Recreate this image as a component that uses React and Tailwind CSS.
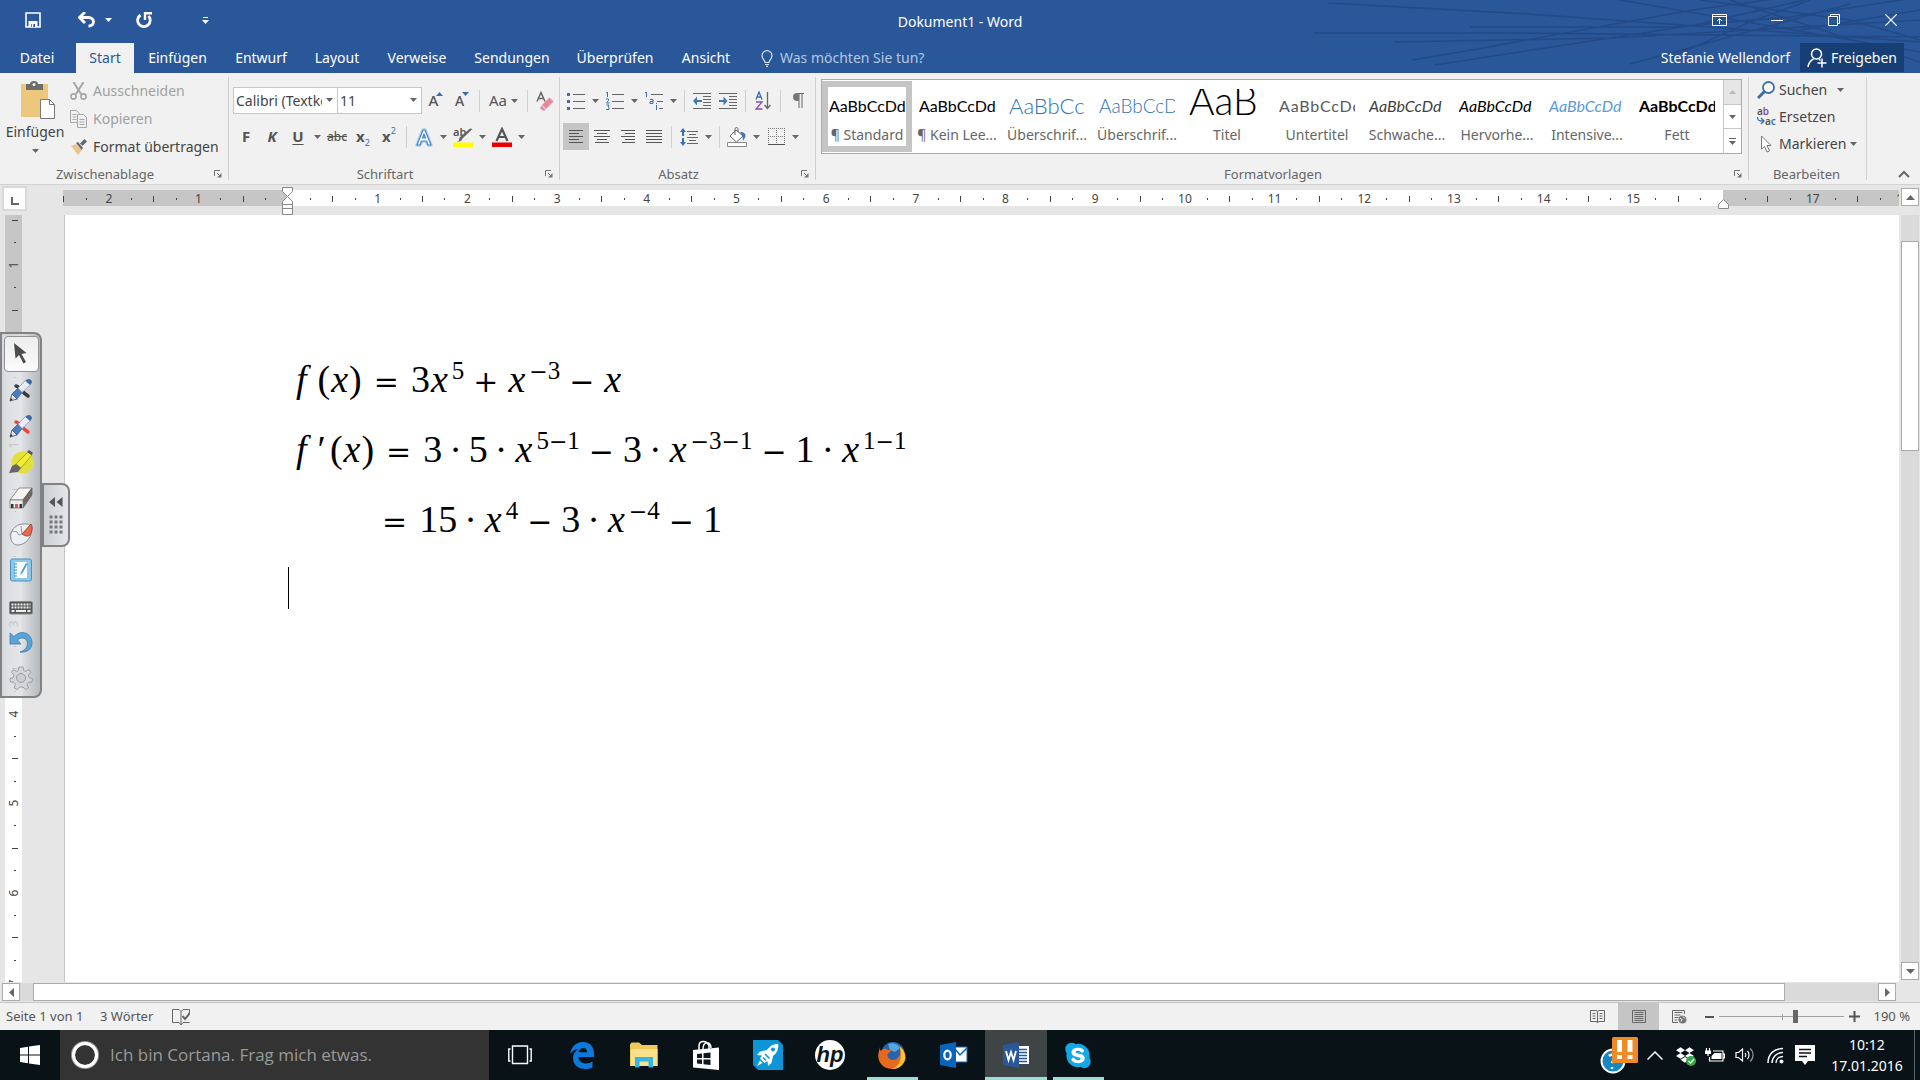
import React from "react";
import { FaEdge, FaDropbox, FaSkype } from "react-icons/fa";

const UI = "font-['Noto_Sans',sans-serif]";

function Caret({ up = false, className = "" }) {
  return (
    <svg viewBox="0 0 7 4" className={`h-1 w-[7px] shrink-0 fill-current ${className}`} aria-hidden="true">
      <path d={up ? "M0 4h7L3.5 0z" : "M0 0h7L3.5 4z"} />
    </svg>
  );
}

function Tool({ label, active = false, children }) {
  return (
    <button
      type="button"
      aria-label={label}
      className={`flex h-[27px] w-[26px] shrink-0 items-center justify-center ${active ? "bg-[#c5c5c5]" : ""}`}
    >
      {children}
    </button>
  );
}

function Drop({ label }) {
  return (
    <button type="button" aria-label={label} className="flex h-[27px] w-[13px] shrink-0 items-center justify-center text-[#666]">
      <Caret />
    </button>
  );
}

function Sep() {
  return <span className="mx-1 h-[22px] w-px shrink-0 bg-[#d0d0d0]" />;
}

function Launcher() {
  return (
    <button type="button" aria-label="Mehr Optionen" className="flex h-4 w-4 items-center justify-center">
      <svg viewBox="0 0 8 8" className="h-2 w-2" fill="none" stroke="#777" aria-hidden="true">
        <path d="M.5 6V.5H6M3 3l3 3" />
        <path d="M7.500 3v4.500H3z" fill="#777" stroke="none" />
      </svg>
    </button>
  );
}

function Group({ title, launcher = true, width, children }) {
  return (
    <section className={`flex flex-col ${width}`} aria-label={title}>
      <div className="flex flex-1">
        <div className="min-w-0 flex-1">{children}</div>
      </div>
      <div className="flex h-5 items-center pr-0.5">
        <span className="flex-1 text-center text-[13px] leading-5 text-[#666]">{title}</span>
        {launcher && <Launcher />}
      </div>
    </section>
  );
}

function Divider() {
  return <span className="my-1 w-px shrink-0 bg-[#d0d0d0]" />;
}

/* ---------- title bar ---------- */

function TitleBar() {
  return (
    <div className="flex h-[43px] items-start justify-between">
      <div className="flex w-0 flex-1 items-center pt-2 text-white">
        <button type="button" aria-label="Speichern" className="ml-5 flex h-6 w-[26px] items-center justify-center">
          <svg viewBox="0 0 16 16" className="h-4 w-4" fill="none" stroke="currentColor" strokeWidth="1.600" aria-hidden="true">
            <path d="M1 1h14v14H1z" />
            <path d="M3.500 9h9v6h-9z" fill="currentColor" stroke="none" />
            <path d="M6 12h4v3H6z" fill="#2a579a" stroke="none" />
            <path d="M7.500 12v3" />
          </svg>
        </button>
        <button type="button" aria-label="Rückgängig" className="ml-7 flex h-6 w-[26px] items-center justify-center">
          <svg viewBox="0 0 18 16" className="h-4 w-[18px]" fill="none" stroke="currentColor" strokeWidth="2.800" aria-hidden="true">
            <path d="M2 5.500h8.500c3 0 5 1.800 5 4.300s-2 4.200-5 4.200" />
            <path d="M7 0L1.500 5.500 7 11" />
          </svg>
        </button>
        <button type="button" aria-label="Rückgängig-Liste" className="flex h-6 w-4 items-center justify-center">
          <Caret />
        </button>
        <button type="button" aria-label="Wiederholen" className="ml-4 flex h-6 w-6 items-center justify-center">
          <svg viewBox="0 0 18 18" className="h-[18px] w-[18px]" fill="none" stroke="currentColor" strokeWidth="2.800" aria-hidden="true">
            <path d="M5.500 4A6.300 6.300 0 1 0 13.500 5" />
            <path d="M10 9V2.200h7" strokeWidth="2.400" />
          </svg>
        </button>
        <button type="button" aria-label="Symbolleiste anpassen" className="ml-[39px] flex h-6 w-5 flex-col items-center justify-center gap-0.5">
          <span className="h-px w-[5px] bg-white" />
          <Caret />
        </button>
      </div>
      <h1 className="pt-3 text-sm leading-5 text-white">Dokument1 - Word</h1>
      <div className="flex w-0 flex-1 justify-end pt-2 text-white">
        <button type="button" aria-label="Menüband-Anzeigeoptionen" className="flex h-6 w-[58px] items-center justify-center">
          <svg viewBox="0 0 15 12" className="h-3 w-[15px]" fill="none" stroke="currentColor" aria-hidden="true">
            <path d="M.5.5h14v11H.5zM.5 2.500h14M7.500 10V5M5 7l2.500-2.500L10 7" />
          </svg>
        </button>
        <button type="button" aria-label="Minimieren" className="flex h-6 w-[57px] items-center justify-center">
          <span className="h-px w-3 bg-white" />
        </button>
        <button type="button" aria-label="Verkleinern" className="flex h-6 w-[57px] items-center justify-center">
          <svg viewBox="0 0 12 12" className="h-3 w-3" fill="none" stroke="currentColor" aria-hidden="true">
            <path d="M.5 2.500h9v9h-9zM2.500 2.500v-2h9v9h-2" />
          </svg>
        </button>
        <button type="button" aria-label="Schließen" className="mr-px flex h-6 w-[57px] items-center justify-center">
          <svg viewBox="0 0 12 12" className="h-3 w-3" fill="none" stroke="currentColor" strokeWidth="1.200" aria-hidden="true">
            <path d="M0 0l12 12M12 0L0 12" />
          </svg>
        </button>
      </div>
    </div>
  );
}

const TABS = [
  ["Datei", "w-[74px] mr-0.5"],
  ["Start", "w-[58px]"],
  ["Einfügen", "w-[87px]"],
  ["Entwurf", "w-20"],
  ["Layout", "w-[72px]"],
  ["Verweise", "w-[88px]"],
  ["Sendungen", "w-[102px]"],
  ["Überprüfen", "w-[104px]"],
  ["Ansicht", "w-[78px]"],
];

function TabRow() {
  return (
    <div className="flex h-[30px] items-stretch">
      <nav className="flex">
        {TABS.map(([t, w]) => (
          <button
            key={t}
            type="button"
            className={`${w} text-center text-sm ${t === "Start" ? "bg-[#f1f1f1] text-[#2a579a]" : "text-white"}`}
          >
            {t}
          </button>
        ))}
      </nav>
      <label className="ml-4 flex items-center gap-[7px] text-[#b5c7e3]">
        <svg viewBox="0 0 12 17" className="h-[17px] w-3" fill="none" stroke="#d6e0f0" strokeWidth="1.200" aria-hidden="true">
          <path d="M4 12.500c0-2.500-3-3.500-3-6.800a5 5 0 0 1 10 0c0 3.300-3 4.300-3 6.800zM4 14.500h4M5 16.400h2" />
        </svg>
        <input
          aria-label="Was möchten Sie tun?"
          placeholder="Was möchten Sie tun?"
          className="w-60 bg-transparent text-sm outline-none placeholder:text-[#b5c7e3]"
        />
      </label>
      <div className="ml-auto flex items-stretch pr-4">
        <button type="button" className="px-2.5 text-sm text-white">Stefanie Wellendorf</button>
        <button type="button" className="mb-px flex w-[104px] items-center justify-center gap-1 bg-[#173f75] text-sm text-white">
          <svg viewBox="0 0 20 20" className="h-5 w-5 shrink-0" fill="none" stroke="currentColor" strokeWidth="1.500" aria-hidden="true">
            <circle cx="9.500" cy="6" r="5" />
            <path d="M1 19c.5-4 2.500-6.500 5.500-8M12 11l1.500 1.500M15 10.500v9M10.500 15h9" />
          </svg>
          Freigeben
        </button>
      </div>
    </div>
  );
}

function Header() {
  return (
    <header className="relative shrink-0 bg-[#2a579a]">
      <svg viewBox="0 0 620 73" className="absolute right-0 top-0 h-[73px] w-[620px]" fill="none" stroke="#234a86" strokeWidth="1.600" aria-hidden="true">
        <path d="M28 3l200 11 392 28M14 33h200l406 4M94 42l220-4 306-18M112 60l60-10 220-40 90-12M135 65l260-40 110-25M320 0l300 52M400 0l150 20 70 20M170 27h200l120-10 130-20M360 62l90-40 60-22M430 0l190 62M330 64l220-60M500 30l120-20" />
      </svg>
      <div className="relative">
        <TitleBar />
        <TabRow />
      </div>
    </header>
  );
}

/* ---------- ribbon ---------- */

function Clipboard() {
  return (
    <Group title="Zwischenablage" width="w-[228px]">
      <div className="flex">
        <button type="button" className="mt-2 flex w-[70px] flex-col items-center text-[#444]">
          <svg viewBox="0 0 36 38" className="ml-1.5 h-[38px] w-9" aria-hidden="true">
            <path d="M1 3h27v33H1z" fill="#edc77c" />
            <path d="M6 9V3h4c0-2 1.500-3 4-3s4 1 4 3h5v6z" fill="#6d6d6d" />
            <circle cx="14" cy="3.500" r="1.500" fill="#f1f1f1" />
            <path d="M20.500 18.500h9l5 5V37.500h-14z" fill="#fff" stroke="#777" />
            <path d="M29.500 18.500v5h5" fill="none" stroke="#777" />
          </svg>
          <span className="mt-[3px] text-sm leading-5">Einfügen</span>
          <Caret className="mt-[7px] text-[#666]" />
        </button>
        <div className="mt-1 flex flex-col">
          <button type="button" className="flex h-7 items-center gap-1.5 text-sm text-[#a0a0a0]">
            <svg viewBox="0 0 17 18" className="h-[18px] w-[17px]" fill="none" stroke="#a6a6a6" strokeWidth="1.600" aria-hidden="true">
              <path d="M3.500 0l7.500 12M13.500 0L6 12" strokeWidth="2" />
              <circle cx="3.500" cy="14.500" r="2.600" />
              <circle cx="13.500" cy="14.500" r="2.600" />
            </svg>
            Ausschneiden
          </button>
          <button type="button" className="flex h-7 items-center gap-1.5 text-sm text-[#a0a0a0]">
            <svg viewBox="0 0 17 18" className="h-[18px] w-[17px]" fill="#f1f1f1" stroke="#a6a6a6" aria-hidden="true">
              <path d="M.5.500h6l3 3v9h-9zM2.500 4.500h4M2.500 7h4M2.500 9.500h4" />
              <path d="M7.500 4.500h6l3 3v10h-9zM9.500 9.500h5M9.500 12h5M9.500 14.500h5" />
            </svg>
            Kopieren
          </button>
          <button type="button" className="flex h-7 items-center gap-1.5 text-sm text-[#444]">
            <svg viewBox="0 0 17 16" className="h-4 w-[17px]" aria-hidden="true">
              <path d="M1 7l5-2 6 6-4 5z" fill="#edc38a" />
              <path d="M6 4l2-1 5 6-1.500 1.800zM10 4.500L14.500 0 17 2.500l-4.500 4.200z" fill="#666" />
            </svg>
            Format übertragen
          </button>
        </div>
      </div>
    </Group>
  );
}

function Combo({ label, value, width }) {
  return (
    <label className={`relative -mr-px flex h-[27px] items-center border border-[#c6c6c6] bg-white ${width}`}>
      <select aria-label={label} className="h-full w-full appearance-none bg-transparent pl-0.5 pr-[15px] text-sm text-[#444] outline-none">
        <option>{value}</option>
      </select>
      <Caret className="pointer-events-none absolute right-1 top-2.5 text-[#666]" />
    </label>
  );
}

function FontGroup() {
  return (
    <Group title="Schriftart" width="w-[330px]">
      <div className="flex flex-col gap-[9px] pl-1 pt-3.5 text-[#555]">
        <div className="flex items-center">
          <Combo label="Schriftart" value="Calibri (Textkörper)" width="w-[105px]" />
          <Combo label="Schriftgrad" value="11" width="w-[85px]" />
          <span className="w-0.5" />
          <Tool label="Schrift vergrößern">
            <span className="text-[15px] font-medium">A</span>
            <Caret up className="-ml-0.5 mb-3.5 text-[#3b6fb5]" />
          </Tool>
          <Tool label="Schrift verkleinern">
            <span className="text-sm font-medium">A</span>
            <Caret className="-ml-0.5 mb-3.5 text-[#3b6fb5]" />
          </Tool>
          <Sep />
          <button type="button" aria-label="Groß-/Kleinschreibung" className="flex h-[27px] w-[39px] items-center justify-center gap-1 text-[15px]">
            Aa
            <Caret className="text-[#666]" />
          </button>
          <Sep />
          <Tool label="Formatierung löschen">
            <svg viewBox="0 0 18 20" className="h-5 w-[18px]" aria-hidden="true">
              <path d="M1 10.500L5 1.500l4 9M2.500 7.500h5" fill="none" stroke="#666" strokeWidth="1.500" />
              <path d="M13.500 6.500l4 4-7.500 7.500-4-4z" fill="#e8899b" />
              <path d="M5.500 14.500l4 4-1 1H6.500L4 17z" fill="#e8899b" />
            </svg>
          </Tool>
        </div>
        <div className="flex items-center">
          <Tool label="Fett"><span className="text-[15px] font-bold">F</span></Tool>
          <Tool label="Kursiv"><span className="text-[15px] font-bold italic">K</span></Tool>
          <Tool label="Unterstrichen"><span className="text-[15px] font-bold underline decoration-1 underline-offset-2">U</span></Tool>
          <Drop label="Unterstreichungsart" />
          <Tool label="Durchgestrichen"><span className="text-xs font-medium line-through">abc</span></Tool>
          <Tool label="Tiefgestellt">
            <span className="text-[15px] font-bold">x</span>
            <span className="mt-3 text-[9px] text-[#3b6fb5]">2</span>
          </Tool>
          <Tool label="Hochgestellt">
            <span className="text-[15px] font-bold">x</span>
            <span className="mb-3 text-[9px] text-[#3b6fb5]">2</span>
          </Tool>
          <Sep />
          <Tool label="Texteffekte">
            <svg viewBox="0 0 18 20" className="h-5 w-[18px]" fill="none" strokeLinejoin="round" aria-hidden="true">
              <path d="M2 18L8 3h2l6 15h-3l-1.500-4h-5L5 18zM7.500 11h3L9 7z" stroke="#b5d3f2" strokeWidth="3.500" />
              <path d="M2 18L8 3h2l6 15h-3l-1.500-4h-5L5 18zM7.500 11h3L9 7z" fill="#fff" stroke="#4481c4" strokeWidth="1.200" />
            </svg>
          </Tool>
          <Drop label="Texteffekte wählen" />
          <Tool label="Texthervorhebungsfarbe">
            <svg viewBox="0 0 20 20" className="h-5 w-5" aria-hidden="true">
              <text x="0" y="9" fontSize="11" fontWeight="600" fill="#555">ab</text>
              <path d="M19.500 2L10 11l-2 3-4 1 2-1.500.5-3L17 1.500z" fill="#666" />
              <path d="M0 15.500h20v4.500H0z" fill="#ffff00" />
            </svg>
          </Tool>
          <Drop label="Hervorhebungsfarbe wählen" />
          <Tool label="Schriftfarbe">
            <svg viewBox="0 0 20 20" className="h-5 w-5" aria-hidden="true">
              <path d="M4.500 14L10 2l5.500 12M6.500 10h7" fill="none" stroke="#555" strokeWidth="2.200" />
              <path d="M0 15.500h20v4.500H0z" fill="#ea0000" />
            </svg>
          </Tool>
          <Drop label="Schriftfarbe wählen" />
        </div>
      </div>
    </Group>
  );
}

function Lines({ d }) {
  return (
    <svg viewBox="0 0 16 13" className="h-[13px] w-4" fill="none" stroke="#555" aria-hidden="true">
      <path d={d} />
    </svg>
  );
}

function ParagraphGroup() {
  return (
    <Group title="Absatz" width="w-[255px]">
      <div className="flex flex-col gap-[9px] pl-[3px] pt-3.5">
        <div className="flex items-center">
          <Tool label="Aufzählungszeichen">
            <svg viewBox="0 0 18 18" className="h-[18px] w-[18px]" aria-hidden="true">
              <path d="M6 2.500h12M6 9.500h12M6 16.500h12" stroke="#666" />
              <path d="M0 1h3v3H0zM0 8h3v3H0zM0 15h3v3H0z" fill="#3b6fb5" />
            </svg>
          </Tool>
          <Drop label="Aufzählungsarten" />
          <Tool label="Nummerierung">
            <svg viewBox="0 0 18 18" className="h-[18px] w-[18px]" aria-hidden="true">
              <path d="M6 2.500h12M6 9.500h12M6 16.500h12" stroke="#666" />
              <path d="M0 1l1.500-1v5M0 7h2.500v1.500L.5 11h3M.5 13H3l-1 2 1 .5V17.500H0" fill="none" stroke="#3b6fb5" />
            </svg>
          </Tool>
          <Drop label="Nummerierungsarten" />
          <Tool label="Liste mit mehreren Ebenen">
            <svg viewBox="0 0 19 18" className="h-[18px] w-[19px]" aria-hidden="true">
              <path d="M6 2.500h12M12 9.500h6M14 16.500h4" stroke="#666" />
              <path d="M0 1l1.500-1v5M5 7.500h3v4H5v-2h3M11.500 11v1M11.500 13v5" fill="none" stroke="#3b6fb5" />
            </svg>
          </Tool>
          <Drop label="Ebenenarten" />
          <Sep />
          <Tool label="Einzug verkleinern">
            <svg viewBox="0 0 18 16" className="h-4 w-[18px]" aria-hidden="true">
              <path d="M0 .5h18M10 3.500h8M10 6.500h8M10 9.500h8M10 12.500h8M0 15.500h18" stroke="#666" />
              <path d="M9 7H4V3.500L0 8l4 4.500V9h5z" fill="#4078b0" />
            </svg>
          </Tool>
          <Tool label="Einzug vergrößern">
            <svg viewBox="0 0 18 16" className="h-4 w-[18px]" aria-hidden="true">
              <path d="M0 .5h18M10 3.500h8M10 6.500h8M10 9.500h8M10 12.500h8M0 15.500h18" stroke="#666" />
              <path d="M0 7h4.500V3.500L8.500 8l-4 4.500V9H0z" fill="#4078b0" />
            </svg>
          </Tool>
          <Sep />
          <Tool label="Sortieren">
            <svg viewBox="0 0 17 19" className="h-[19px] w-[17px]" fill="none" aria-hidden="true">
              <path d="M1 8.500L4 1l3 7.500M2 6h4" stroke="#3b6fb5" strokeWidth="1.300" />
              <path d="M1 11h6l-6 7h6.500" stroke="#8b4ea5" strokeWidth="1.300" />
              <path d="M12.500 1v16M9.500 14l3 3.500 3-3.500" stroke="#666" strokeWidth="1.300" />
            </svg>
          </Tool>
          <Sep />
          <Tool label="Alle anzeigen">
            <svg viewBox="0 0 11 15" className="h-[15px] w-[11px]" aria-hidden="true">
              <path d="M11 .5H4M6 0v15M9 0v15" stroke="#666" fill="none" />
              <path d="M6 0H4a4 4 0 0 0 0 8h2z" fill="#777" />
            </svg>
          </Tool>
        </div>
        <div className="flex items-center">
          <Tool label="Linksbündig" active><Lines d="M1 .5h14M1 3.500h10M1 6.500h14M1 9.500h10M1 12.500h14" /></Tool>
          <Tool label="Zentriert"><Lines d="M0 .5h16M3 3.500h10M0 6.500h16M3 9.500h10M1 12.500h14" /></Tool>
          <Tool label="Rechtsbündig"><Lines d="M1 .5h14M5 3.500h10M1 6.500h14M5 9.500h10M2 12.500h13" /></Tool>
          <Tool label="Blocksatz"><Lines d="M0 .5h16M0 3.500h16M0 6.500h16M0 9.500h16M0 12.500h16" /></Tool>
          <Sep />
          <Tool label="Zeilenabstand">
            <svg viewBox="0 0 18 18" className="h-[18px] w-[18px]" aria-hidden="true">
              <path d="M7 3.500h11M9 6.500h7M7 9.500h11M9 12.500h7M7 15.500h11" stroke="#666" />
              <path d="M3 0L0 4h2v4h2V4h2zM3 18l3-4H4v-4H2v4H0z" fill="#3b6fb5" />
            </svg>
          </Tool>
          <Drop label="Abstand wählen" />
          <Sep />
          <Tool label="Schattierung">
            <svg viewBox="0 0 20 20" className="h-5 w-5" aria-hidden="true">
              <path d="M3 9l6-6 7 6-6.500 6z" fill="#fff" stroke="#666" />
              <path d="M8 8V2c0-2 3-2 3 0v3" fill="none" stroke="#666" />
              <path d="M13 5c4 0 6 2 5.500 4.500L16 14c0-4-1-6-3-9z" fill="#4078b0" />
              <path d="M.5 15.500h19v4H.5z" fill="#fff" stroke="#888" />
            </svg>
          </Tool>
          <Drop label="Schattierung wählen" />
          <Tool label="Rahmen">
            <svg viewBox="0 0 17 17" className="h-[17px] w-[17px]" fill="none" stroke="#777" aria-hidden="true">
              <path d="M0 .5h17M.5 0v16M16.500 0v16M8.500 0v16M0 8.500h17" strokeDasharray="1 1" />
              <path d="M0 16.500h17" stroke="#555" />
            </svg>
          </Tool>
          <Drop label="Rahmen wählen" />
        </div>
      </div>
    </Group>
  );
}

const STYLES = [
  ["¶ Standard", "AaBbCcDd", "text-base leading-[34px] text-black", true],
  ["¶ Kein Lee...", "AaBbCcDd", "text-base leading-[34px] text-black"],
  ["Überschrif...", "AaBbCcDd", "text-[22px] leading-[34px] font-light text-[#2e74b5]"],
  ["Überschrif...", "AaBbCcDd", "text-[19px] leading-[34px] font-light text-[#2e74b5]"],
  ["Titel", "AaB", "text-[39px] leading-[22px] font-light text-black"],
  ["Untertitel", "AaBbCcDd", "text-base leading-[34px] tracking-wider text-[#5a5a5a]"],
  ["Schwache...", "AaBbCcDd", "text-base leading-[34px] italic text-[#404040]"],
  ["Hervorhe...", "AaBbCcDd", "text-base leading-[34px] italic text-black"],
  ["Intensive...", "AaBbCcDd", "text-base leading-[34px] italic text-[#5b9bd5]"],
  ["Fett", "AaBbCcDd", "text-base leading-[34px] font-bold text-black"],
];

function StylesGroup() {
  return (
    <Group title="Formatvorlagen" width="min-w-0 flex-1">
      <div className="ml-[5px] mr-1.5 mt-1.5 flex h-[75px] border border-[#ababab] bg-white">
        <div className="flex min-w-0 flex-1 overflow-hidden">
          {STYLES.map(([name, sample, look, selected], i) => (
            <button
              key={i}
              type="button"
              className={`my-px flex w-[90px] shrink-0 flex-col items-center pt-2 ${selected ? "ring-[6px] ring-inset ring-[#c5c5c5]" : ""}`}
            >
              <span className="flex h-[30px] w-[76px] items-start overflow-hidden whitespace-nowrap">
                <span className={`font-['Lato',sans-serif] ${look}`}>{sample}</span>
              </span>
              <span className="mt-1.5 w-[84px] whitespace-nowrap text-center text-sm leading-5 text-[#666]">{name}</span>
            </button>
          ))}
        </div>
        <div className="flex w-[18px] flex-col divide-y divide-[#c6c6c6] border-l border-[#c6c6c6] text-[#666]">
          <button type="button" aria-label="Nach oben" className="flex flex-1 items-center justify-center bg-[#e6e6e6] text-[#bbb]"><Caret up /></button>
          <button type="button" aria-label="Nach unten" className="flex flex-1 items-center justify-center"><Caret /></button>
          <button type="button" aria-label="Weitere Formatvorlagen" className="flex flex-1 flex-col items-center justify-center gap-0.5">
            <span className="h-px w-[7px] bg-[#666]" />
            <Caret />
          </button>
        </div>
      </div>
    </Group>
  );
}

function EditGroup() {
  return (
    <Group title="Bearbeiten" launcher={false} width="w-[117px]">
      <div className="flex flex-col pl-2 pt-[3px] text-sm text-[#444]">
        <button type="button" className="flex h-[27px] items-center gap-1">
          <svg viewBox="0 0 18 18" className="h-[18px] w-[18px]" fill="none" stroke="#3d6fa5" aria-hidden="true">
            <circle cx="11.500" cy="6.500" r="5.500" strokeWidth="1.800" fill="#fff" />
            <path d="M7.500 10.500L1 17" strokeWidth="3" />
          </svg>
          Suchen
          <Caret className="ml-1.5 text-[#666]" />
        </button>
        <button type="button" className="flex h-[27px] items-center gap-[3px]">
          <svg viewBox="0 0 19 19" className="h-[19px] w-[19px]" aria-hidden="true">
            <text x="0" y="8" fontSize="10" fontWeight="600" fill="#555">a<tspan fill="#8b4ea5">b</tspan></text>
            <text x="8" y="18" fontSize="10" fontWeight="600" fill="#555">a<tspan fill="#3b6fb5">c</tspan></text>
            <path d="M.5 10c0 4 2 4 6 4M4 11l3 3-3 3" fill="none" stroke="#3b6fb5" strokeWidth="1.300" />
          </svg>
          Ersetzen
        </button>
        <button type="button" className="flex h-[27px] items-center gap-1">
          <svg viewBox="0 0 18 18" className="h-[18px] w-[18px]" fill="#fff" stroke="#777" aria-hidden="true">
            <path d="M4.500 1v13l3-2.500 2.500 5.500 2.500-1-2.500-5.500h4z" />
          </svg>
          Markieren
          <Caret className="text-[#666]" />
        </button>
      </div>
    </Group>
  );
}

function Ribbon() {
  return (
    <div className="flex h-28 shrink-0 border-b border-[#d2d2d2] bg-[#f1f1f1]">
      <Clipboard />
      <Divider />
      <FontGroup />
      <Divider />
      <ParagraphGroup />
      <Divider />
      <StylesGroup />
      <Divider />
      <EditGroup />
      <Divider />
      <div className="flex w-[53px] items-end justify-end pb-0.5 pr-2">
        <button type="button" aria-label="Menüband reduzieren" className="flex h-4 w-4 items-center justify-center">
          <svg viewBox="0 0 12 8" className="h-2 w-3" fill="none" stroke="#666" strokeWidth="2" aria-hidden="true">
            <path d="M1 7l5-5 5 5" />
          </svg>
        </button>
      </div>
    </div>
  );
}

/* ---------- rulers ---------- */

function Marks({ from, to, vertical = false }) {
  const marks = [];
  for (let q = from; q <= to; q++) marks.push(q);
  return marks.map((q) => {
    const whole = q % 4 === 0;
    const half = q % 2 === 0;
    return (
      <span key={q} className={`flex items-center justify-center ${vertical ? "h-0 flex-[2]" : "w-0 flex-[2]"}`}>
        {whole ? (
          <span className={`text-xs leading-4 ${vertical ? "-rotate-90" : ""}`}>{Math.abs(q / 4)}</span>
        ) : half ? (
          <span className={`bg-[#444] ${vertical ? "h-px w-1.5" : "h-1.5 w-px"}`} />
        ) : (
          <span className={`bg-[#444] ${vertical ? "h-px w-0.5" : "h-0.5 w-px"}`} />
        )}
      </span>
    );
  });
}

function HorizontalRuler() {
  return (
    <div className="flex h-[30px] shrink-0 items-start bg-[#e6e6e6] text-[#444]">
      <button type="button" aria-label="Tabstopp" className="ml-1 mt-[3px] flex h-[21px] w-[21px] items-center justify-center bg-[#fdfdfd] outline outline-2 outline-[#d9d9d9]">
        <span className="mt-1 h-2 w-2 border-b-2 border-l-2 border-[#666]" />
      </button>
      <div className="ml-[38px] mt-[5px] flex h-4 flex-1">
        <div className="flex w-[225px] items-center bg-[#c6c6c6] pt-0.5">
          <span className="h-1.5 w-px bg-[#444]" />
          <span className="flex-1" />
          <Marks from={-9} to={-1} />
          <span className="flex-1" />
        </div>
        <div className="relative flex flex-1 items-center bg-white pt-0.5">
          <span className="flex-1" />
          <Marks from={1} to={63} />
          <span className="flex-1" />
          <svg viewBox="0 0 11 28" className="absolute -left-[6px] -top-[3px] h-7 w-[11px]" fill="#fff" stroke="#888" aria-hidden="true">
            <path d="M.5.500h10v4L5.500 9.500.5 4.500zM.5 17.500v-3l5-5 5 5v3zM.5 21.500h10v6H.5zM.5 17.500h10v4H.5z" />
          </svg>
          <svg viewBox="0 0 11 10" className="absolute -right-[6px] top-[9px] z-10 h-2.5 w-[11px]" fill="#fff" stroke="#888" aria-hidden="true">
            <path d="M.5 9.500v-4l5-5 5 5v4z" />
          </svg>
        </div>
        <div className="flex w-44 overflow-hidden bg-[#c6c6c6] pt-0.5">
          <div className="flex w-[191px] shrink-0 items-center">
            <span className="flex-1" />
            <Marks from={65} to={72} />
          </div>
        </div>
      </div>
      <div className="flex w-[21px] justify-end pr-px pt-[3px]">
        <ScrollButton label="Nach oben blättern" d="M0 5h9L4.500 0z" box="0 0 9 5" size="h-[5px] w-[9px]" />
      </div>
    </div>
  );
}

function ScrollButton({ label, d, box, size }) {
  return (
    <button type="button" aria-label={label} className="flex h-[18px] w-[18px] shrink-0 items-center justify-center border border-[#ababab] bg-white">
      <svg viewBox={box} className={`fill-[#666] ${size}`} aria-hidden="true">
        <path d={d} />
      </svg>
    </button>
  );
}

function VerticalRuler() {
  return (
    <div className="ml-[5px] flex w-[17px] shrink-0 flex-col overflow-hidden text-[#444]">
      <div className="flex h-[140px] shrink-0 flex-col justify-end overflow-hidden bg-[#c6c6c6]">
        <div className="flex h-[146px] shrink-0 flex-col items-center pl-0.5">
          <Marks from={-6} to={-1} vertical />
          <span className="flex-1" />
        </div>
      </div>
      <div className="min-h-0 flex-1 overflow-hidden bg-white">
        <div className="flex h-[639px] flex-col items-center pl-0.5">
          <span className="flex-1" />
          <Marks from={1} to={28} vertical />
        </div>
      </div>
    </div>
  );
}

/* ---------- document ---------- */

function V({ children }) {
  return <i className="mx-px">{children}</i>;
}
function F() {
  return <i className="mr-[11px]">f</i>;
}
function Rel() {
  return <span className="mx-3 font-['DejaVu_Serif',serif] text-[30px] leading-none">=</span>;
}
function Op({ children }) {
  return <span className="mx-[9px] font-['DejaVu_Serif',serif] text-[30px] leading-none">{children}</span>;
}
function Dot() {
  return <span className="mx-[7px]">·</span>;
}
function Minus() {
  return <span className="font-['DejaVu_Serif',serif] text-[22px] leading-none">−</span>;
}
function Sup({ children }) {
  return <span className="relative bottom-[13px] ml-[3px] text-[25px] leading-none">{children}</span>;
}

function Page() {
  return (
    <main className="min-w-0 flex-1 border-l border-[#c6c6c6] bg-white pl-[231px] pt-[129px] font-['Liberation_Serif',serif] text-[38px] leading-[70px] text-black">
      <p className="h-[70px] whitespace-nowrap">
        <F />(<V>x</V>)<Rel />3<V>x</V><Sup>5</Sup><Op>+</Op><V>x</V><Sup><Minus />3</Sup><Op>−</Op><V>x</V>
      </p>
      <p className="h-[70px] whitespace-nowrap">
        <F /><span className="mr-1">′</span>(<V>x</V>)<Rel />3<Dot />5<Dot /><V>x</V><Sup>5<Minus />1</Sup><Op>−</Op>3<Dot /><V>x</V><Sup><Minus />3<Minus />1</Sup><Op>−</Op>1<Dot /><V>x</V><Sup>1<Minus />1</Sup>
      </p>
      <p className="h-[70px] whitespace-nowrap pl-[74px]">
        <Rel />15<Dot /><V>x</V><Sup>4</Sup><Op>−</Op>3<Dot /><V>x</V><Sup><Minus />4</Sup><Op>−</Op>1
      </p>
      <div className="-ml-2 mt-[13px] h-[42px] w-px bg-black" />
    </main>
  );
}

/* ---------- floating pen toolbar ---------- */

function Pen({ stroke }) {
  return (
    <svg viewBox="0 0 24 24" className="h-6 w-6" aria-hidden="true">
      <path d="M7 8c2 0 3 2 5 4s4 4 7 6" fill="none" stroke={stroke} strokeWidth="3.500" strokeLinecap="round" />
      <path d="M1 23l2-7 5 5z" fill="#e5e5e5" stroke="#666" />
      <path d="M3 16l6-6 4 4.500-5 6.500z" fill="#4a7dbd" stroke="#3a5f94" strokeWidth=".8" />
      <path d="M9 10l8-8 5 4-9 8.500z" fill="#e9eef4" stroke="#8a9db5" strokeWidth=".8" />
      <path d="M18 1.500c2-1.500 5 0 5 3l-2 2.500-4.500-4z" fill="#3c6aa8" />
      <path d="M1 23l1-3 1.500 1.500z" fill="#222" />
    </svg>
  );
}

const PEN_TOOLS = [
  ["Auswählen",
    <svg viewBox="0 0 24 24" className="h-6 w-6" aria-hidden="true">
      <path d="M5 1l1.500 15.500 3.500-3.500 4.500 8.500 2.500-1.500-4.500-8 5-1z" fill="#4c4c4c" />
    </svg>],
  ["Stift schwarz", <Pen stroke="#3a3a3a" />],
  ["Stift rot", <Pen stroke="#ee4444" />],
  ["Textmarker",
    <svg viewBox="0 0 26 24" className="h-6 w-[26px]" aria-hidden="true">
      <circle cx="14.500" cy="12.500" r="11" fill="#e3e03c" />
      <path d="M8 14L20 2l4 3-11 13z" fill="#f0ef35" stroke="#a9a81e" />
      <path d="M19 2l2-2 4 3-1.500 2z" fill="#555" />
      <path d="M1 23l3-7 4-2 5 4-3 4z" fill="#666" />
    </svg>],
  ["Radierer",
    <svg viewBox="0 0 24 24" className="h-6 w-6" strokeWidth=".8" aria-hidden="true">
      <path d="M1 14L10 2h13l-9 12z" fill="#f7f5f0" stroke="#777" />
      <path d="M14 14l9-12v7l-9 13z" fill="#6d6862" stroke="#666" />
      <path d="M1 14h13v8H1z" fill="#eee" stroke="#777" />
      <path d="M2 18h2.500v4H2zM10.500 18H13v4h-2.500z" fill="#333" />
      <path d="M6 18h3v4H6z" fill="#e05050" />
    </svg>],
  ["Rechtsklick",
    <svg viewBox="0 0 24 24" className="h-6 w-6" strokeWidth=".9" aria-hidden="true">
      <path d="M2 17C0 10 6 2 14 2c9-1 10 4 8 10-2 7-8 11-13 11-4 0-6-2-7-6z" fill="#eef0f4" stroke="#7c8088" />
      <path d="M13 12l9-10c2 3 1 8-1 11-2 2-5 1-8-1z" fill="#ea6a4e" stroke="#8c4436" />
      <path d="M3 9c2 1 4 0 5 1s1 3 2 3 2-1 3-1L12 4" fill="none" stroke="#8a8e96" />
    </svg>],
  ["Notebook",
    <svg viewBox="0 0 24 24" className="h-6 w-6" aria-hidden="true">
      <rect x="1.500" y="1" width="21" height="22" rx="2" fill="#8cc8e8" stroke="#4a90bf" />
      <path d="M6 4h12v16H6z" fill="#fff" />
      <path d="M5 6h3M5 9h3M5 12h3M5 15h3M5 18h3" stroke="#2d8ac0" />
      <path d="M17 5l-5 9-1 3 2.500-2 5-9z" fill="#4a9fd0" />
    </svg>],
  ["Tastatur",
    <svg viewBox="0 0 24 14" className="mt-1 h-3.5 w-6" aria-hidden="true">
      <rect x=".5" y=".5" width="23" height="12.500" rx="1.500" fill="#555" stroke="#888" />
      <path d="M2.500 3.500h19M2.500 6.500h19" stroke="#eee" strokeWidth="2" strokeDasharray="2 1" />
      <path d="M2.500 10h3M7 10h10M18.500 10h3" stroke="#eee" strokeWidth="2" />
    </svg>],
  ["Rückgängig machen",
    <svg viewBox="0 0 24 24" className="h-6 w-6" aria-hidden="true">
      <path d="M1 3v11h11L8.500 10c4-4 10-2 10 3.500 0 5-4 7.500-7.500 8.500 6 1 12-2.500 12-9C23 3 12-1 5 6.500z" fill="#5ba4da" stroke="#3a78ad" strokeWidth=".8" />
    </svg>],
  ["Einstellungen",
    <svg viewBox="0 0 24 24" className="h-6 w-6" fill="#d4d6d8" stroke="#9c9fa2" aria-hidden="true">
      <path d="M10 1h4l.7 3.500 2 .9L20 3.500l2 3-2.500 2.500.6 2.500 3.400 1-.5 3.500-3.500.3-1.500 2.200 1.500 3.200-3 1.800-2.500-2.500h-3L8 23.500l-3-1.800 1.500-3.200L5 16.300l-3.500-.3-.5-3.500 3.400-1L5 9 2.500 6.500l2-3L7.300 5.400l2-.9z" />
      <circle cx="12" cy="12" r="4.500" fill="#cbcdd0" />
    </svg>],
];

function PenToolbar() {
  return (
    <aside className="absolute left-0 top-[117px] z-10 flex items-center" aria-label="Stiftwerkzeuge">
      <div className="flex h-[366px] w-[42px] flex-col items-center rounded-r-lg border-2 border-[#808284] bg-gradient-to-r from-[#d5d7da]/85 via-[#dfe1e4]/85 to-[#b0b3b6]/90 pt-0.5">
        {PEN_TOOLS.map(([label, icon], i) => (
          <button
            key={label}
            type="button"
            aria-label={label}
            className={`flex h-9 w-[35px] shrink-0 items-center justify-center ${i === 0 ? "rounded border border-[#8f9193] bg-gradient-to-b from-[#ededee] to-[#fbfbfb]" : ""}`}
          >
            {icon}
          </button>
        ))}
      </div>
      <button
        type="button"
        aria-label="Leiste einklappen"
        className="flex h-16 w-7 flex-col items-center justify-center gap-2 rounded-r-lg border-2 border-[#808284] bg-gradient-to-r from-[#cdd0d3] to-[#e4e6e8]"
      >
        <svg viewBox="0 0 14 10" className="h-2.5 w-3.5 fill-[#555]" aria-hidden="true">
          <path d="M6 0v10L0 5zM13.500 0v10l-6-5z" />
        </svg>
        <svg viewBox="0 0 14 19" className="h-[19px] w-3.5" stroke="#777" strokeWidth="3" strokeDasharray="3 2" aria-hidden="true">
          <path d="M.5 2h13M.5 7h13M.5 12h13M.5 17h13" />
        </svg>
      </button>
    </aside>
  );
}

function Workspace() {
  return (
    <div className="relative flex min-h-0 flex-1 bg-[#e6e6e6]">
      <VerticalRuler />
      <div className="w-[42px] shrink-0" />
      <Page />
      <div className="flex w-[21px] shrink-0 flex-col items-end bg-[#e6e6e6] pr-px">
        <div className="w-[18px] flex-1 bg-[#dadada] pt-[26px]">
          <div className="h-[210px] border border-[#ababab] bg-white" />
        </div>
        <div className="pb-0.5">
          <ScrollButton label="Nach unten blättern" d="M0 0h9L4.500 5z" box="0 0 9 5" size="h-[5px] w-[9px]" />
        </div>
      </div>
      <PenToolbar />
    </div>
  );
}

function HorizontalScroll() {
  return (
    <div className="flex h-5 shrink-0 items-center bg-[#e6e6e6] pl-0.5 pr-6">
      <ScrollButton label="Nach links blättern" d="M5 0v9L0 4.500z" box="0 0 5 9" size="h-[9px] w-[5px]" />
      <div className="h-[18px] flex-1 bg-[#dadada] pl-[13px] pr-[93px]">
        <div className="h-full border border-[#ababab] bg-white" />
      </div>
      <ScrollButton label="Nach rechts blättern" d="M0 0v9l5-4.500z" box="0 0 5 9" size="h-[9px] w-[5px]" />
    </div>
  );
}

/* ---------- status bar ---------- */

function StatusBar() {
  return (
    <footer className="flex h-7 shrink-0 items-stretch border-t border-[#c6c6c6] bg-[#f1f1f1] text-[13px] text-[#555]">
      <button type="button" className="w-[88px] whitespace-nowrap pl-1.5 text-left">Seite 1 von 1</button>
      <button type="button" className="w-[76px] whitespace-nowrap pl-3 text-left">3 Wörter</button>
      <button type="button" aria-label="Rechtschreibprüfung" className="flex w-[34px] items-center justify-center">
        <svg viewBox="0 0 18 18" className="h-[18px] w-[18px]" fill="none" stroke="#666" aria-hidden="true">
          <path d="M9 3.500L7 1.500H.5v13H7l2 2.500 2-2.500h6.500M9 3.500V17M9 3.500l2-2h6.500V5" />
          <path d="M10.500 8l2.500 3 5-6" strokeWidth="2" />
        </svg>
      </button>
      <div className="ml-auto flex items-stretch">
        <button type="button" aria-label="Lesemodus" className="flex w-[42px] items-center justify-center">
          <svg viewBox="0 0 15 14" className="h-3.5 w-[15px]" fill="none" stroke="#666" aria-hidden="true">
            <path d="M7.500 2L6.500.5H.5v11h6l1 1.500 1-1.500h6V.5h-6zM7.500 2v11M2.500 3.500h3M2.500 6h3M2.500 8.500h3M9.500 3.500h3M9.500 6h3M9.500 8.500h3" />
          </svg>
        </button>
        <button type="button" aria-label="Seitenlayout" className="flex w-[41px] items-center justify-center bg-[#c5c5c5]">
          <svg viewBox="0 0 14 13" className="h-[13px] w-3.5" fill="none" stroke="#666" aria-hidden="true">
            <path d="M.5.5h13v12H.5zM2.500 2.500h9M2.500 4.500h9M2.500 6.500h9M2.500 8.500h9M2.500 10.500h9" />
          </svg>
        </button>
        <button type="button" aria-label="Weblayout" className="flex w-[40px] items-center justify-center">
          <svg viewBox="0 0 15 14" className="h-3.5 w-[15px]" fill="none" stroke="#666" aria-hidden="true">
            <path d="M6 12.500H.5V.5h12V4M2.500 2.500h8M2.500 5h6M2.500 7.500h4M2.500 10h3" />
            <circle cx="10.500" cy="9.500" r="4" fill="#777" stroke="none" />
            <path d="M8 8l2 1.500-1 2M11 6.500l2 2" stroke="#f1f1f1" />
          </svg>
        </button>
        <button type="button" aria-label="Verkleinern" className="flex w-5 items-center justify-center">
          <span className="h-0.5 w-[9px] bg-[#555]" />
        </button>
        <div className="relative flex w-[125px] items-center">
          <span className="absolute left-0 h-px w-full bg-[#a0a0a0]" />
          <span className="absolute left-1/2 h-1.5 w-px bg-[#a0a0a0]" />
          <input
            type="range"
            aria-label="Zoom"
            min="0"
            max="100"
            defaultValue="62"
            className="relative h-full w-full appearance-none bg-transparent [&::-webkit-slider-thumb]:h-[13px] [&::-webkit-slider-thumb]:w-[5px] [&::-webkit-slider-thumb]:appearance-none [&::-webkit-slider-thumb]:bg-[#666]"
          />
        </div>
        <button type="button" aria-label="Vergrößern" className="flex w-5 items-center justify-center">
          <svg viewBox="0 0 11 11" className="h-[11px] w-[11px] fill-[#555]" aria-hidden="true">
            <path d="M4.500 0h2v4.500H11v2H6.500V11h-2V6.500H0v-2h4.500z" />
          </svg>
        </button>
        <button type="button" className="w-14 whitespace-nowrap pr-2.5 text-right">190 %</button>
      </div>
    </footer>
  );
}

/* ---------- taskbar ---------- */

const APPS = [
  ["Aktive Anwendungen",
    <svg viewBox="0 0 24 20" className="h-5 w-6" fill="none" stroke="#fff" strokeWidth="1.400" aria-hidden="true">
      <path d="M4.500 1h15v17.500h-15zM2.500 4H.8v12h1.700M21.500 4h1.700v12h-1.700" />
    </svg>],
  ["Edge",
    <svg viewBox="0 0 24 27" className="h-[27px] w-6" aria-hidden="true">
      <path d="M0 12C1.500 4 6.500 0 13 0c7 0 11 5 11 11.500V15H8.500c0 4 3.500 6.500 7.500 6.500 2.600 0 4.800-.8 6.500-2v6C20.300 26.500 17.500 27 15 27 8 27 3 22.500 3 16c0-4 2-7 5.500-9C5 7.500 2 9 0 12zm8.700-1.700h8.500C17.200 7.500 15.600 6 13.200 6c-2.400 0-4.100 1.600-4.500 4.300z" fill="#0a7bdc" />
    </svg>],
  ["Explorer",
    <svg viewBox="0 0 28 26" className="h-[26px] w-7" aria-hidden="true">
      <path d="M0 2.500L1.500.5H9L12 3h15.500v21H0z" fill="#f0c95c" />
      <path d="M1 7h26.500v17H1z" fill="#fbe08b" />
      <path d="M5 25.500V15h18v10.500h-4.500v-6h-9v6z" fill="#33b5e5" />
    </svg>],
  ["Store",
    <svg viewBox="0 0 26 30" className="h-[30px] w-[26px]" aria-hidden="true">
      <path d="M0 10l26-2.500V30L0 27.500z" fill="#fff" />
      <path d="M6 11V6c0-6 8-6 10 0v3M10 9c0-8 8-8 8-1" fill="none" stroke="#fff" strokeWidth="1.500" />
      <path d="M4 14l5-.5V18H4zM10.500 13.200l7-.7V18h-7zM4 19.500h5V24l-5-.5zM10.500 19.500h7V25l-7-.8z" fill="#0e171b" />
    </svg>],
  ["HP Jumpstart",
    <svg viewBox="0 0 30 30" className="h-[30px] w-[30px]" aria-hidden="true">
      <path d="M0 0h25l5 5v25H5l-5-5z" fill="#0c96d8" />
      <path d="M25 4c-5 0-8 2-11 6l-7 1.500L4 15l5 .5-2 3 4.500 4.500 3-2 .5 5 3.500-3 1.500-7c4-3 6-7 5-12zM7 20.500L4 26l5.500-3z" fill="#fff" />
      <circle cx="20" cy="9.500" r="2" fill="#0c96d8" />
      <path d="M12 14l4.500 4.500M10 17.500l3 3" stroke="#0c96d8" strokeWidth="1.500" />
    </svg>],
  ["HP",
    <span className="flex h-[30px] w-[30px] items-center justify-center rounded-full bg-white font-['Liberation_Sans',sans-serif] text-[22px] font-bold italic leading-none text-[#0c1418]">
      hp
    </span>],
  ["Firefox",
    <svg viewBox="0 0 28 28" className="h-7 w-7" aria-hidden="true">
      <circle cx="15" cy="12.500" r="11.500" fill="#2a63ad" />
      <path d="M10 3c5-2 10 0 12 4l-5 4-5-2z" fill="#52a7dd" />
      <path d="M2 6c0 2 0 3 1 4 1-2 3-2.500 5-2 1 1 3 1 5 1-1 3-4 3-3.500 6 2 5 8 5 11 1 3-3.500 2-8 0-11 5 2 8 8 7 13-2 8-9 10.500-14 10C4 27.500-1 20 .5 12z" fill="#e66a1e" />
      <path d="M22 6c5 4 6 10 4.500 14-3 6-8 8-12.500 8 6-2 11-8 8-22z" fill="#fcc534" />
    </svg>, "open"],
  ["Outlook",
    <svg viewBox="0 0 28 26" className="h-[26px] w-7" aria-hidden="true">
      <path d="M14 5h13v15H14z" fill="#fff" stroke="#0a64ba" />
      <path d="M15 7l5 6 7-7" fill="none" stroke="#0a64ba" strokeWidth="1.500" />
      <path d="M0 3l16-3v26L0 23z" fill="#0a64ba" />
      <ellipse cx="7.500" cy="13" rx="3.200" ry="4.300" fill="none" stroke="#fff" strokeWidth="2.200" />
    </svg>],
  ["Word",
    <svg viewBox="0 0 27 26" className="h-[26px] w-[27px]" aria-hidden="true">
      <path d="M15 4h11v18H15z" fill="#fff" />
      <path d="M16 7.500h8M16 10.500h8M16 13.500h8M16 16.500h8M16 19.500h8" stroke="#2a579a" strokeWidth="1.500" />
      <path d="M0 3l16-3v26L0 23z" fill="#2a579a" />
      <path d="M3 9l2.500 9L8 10l2.500 8L13 9" fill="none" stroke="#fff" strokeWidth="1.800" />
    </svg>, "active"],
  ["Skype", <span className="flex h-7 w-7 items-center justify-center rounded-full bg-[radial-gradient(circle,#fff_45%,transparent_46%)]"><FaSkype className="h-[29px] w-[29px] text-[#10a9e5]" /></span>, "open"],
];

function TrayIcon({ label, width = "w-[30px]", children }) {
  return (
    <button type="button" aria-label={label} className={`flex h-full items-center justify-center ${width}`}>
      {children}
    </button>
  );
}

function Taskbar() {
  return (
    <div className="flex h-[50px] shrink-0 items-stretch bg-[#081217] text-white">
      <button type="button" aria-label="Start" className="flex w-[60px] items-center justify-center">
        <svg viewBox="0 0 20 20" className="h-5 w-5 fill-white" aria-hidden="true">
          <path d="M0 3l8-1.200v7.700H0zM9 1.600L20 0v9.500H9zM0 10.500h8v7.700L0 17zM9 10.500h11V20L9 18.400z" />
        </svg>
      </button>
      <label className="flex w-[429px] items-center gap-[11px] bg-[#333] pl-[11px]">
        <svg viewBox="0 0 28 28" className="h-7 w-7 shrink-0" fill="none" aria-hidden="true">
          <circle cx="14" cy="14" r="12" stroke="#999" strokeWidth="4" />
          <circle cx="14" cy="14" r="11.500" stroke="#fff" strokeWidth="3" />
        </svg>
        <input
          aria-label="Ich bin Cortana. Frag mich etwas."
          placeholder="Ich bin Cortana. Frag mich etwas."
          className="min-w-0 flex-1 bg-transparent font-['Open_Sans',sans-serif] text-[17px] outline-none placeholder:text-[#9a9a9a]"
        />
      </label>
      {APPS.map(([label, icon, state]) => (
        <button key={label} type="button" aria-label={label} className={`flex w-[62px] flex-col items-center ${state === "active" ? "bg-[#3f4446]" : ""}`}>
          <span className="flex flex-1 items-center pt-[3px]">{icon}</span>
          <span className={`h-[3px] ${state === "active" ? "w-full bg-[#9adfd6]" : state === "open" ? "w-[51px] bg-[#9adfd6]" : "w-full"}`} />
        </button>
      ))}
      <div className="ml-auto flex items-center">
        <TrayIcon label="Hinweis" width="w-[42px]">
          <svg viewBox="0 0 38 38" className="h-[38px] w-[38px]" aria-hidden="true">
            <circle cx="13" cy="25" r="11.500" fill="#1487c4" stroke="#fff" strokeWidth="2" />
            <path d="M9 20c3-3 7 0 5 3l-2 4M12 31v2" fill="none" stroke="#fff" strokeWidth="2.500" />
            <rect x="12" y="1" width="26" height="26" rx="1.500" fill="#f08a24" />
            <path d="M17 4h5v12h-5zM27.500 4h5v12h-5zM17 19h5v4h-5zM27.500 19h5v4h-5z" fill="#fff" />
          </svg>
        </TrayIcon>
        <TrayIcon label="Ausgeblendete Symbole">
          <svg viewBox="0 0 16 9" className="h-[9px] w-4" fill="none" stroke="#fff" strokeWidth="1.500" aria-hidden="true">
            <path d="M.5 8.500L8 1l7.500 7.500" />
          </svg>
        </TrayIcon>
        <TrayIcon label="Dropbox">
          <span className="relative">
            <FaDropbox className="h-[18px] w-[18px]" />
            <svg viewBox="0 0 10 10" className="absolute -bottom-0.5 -right-0.5 h-2.5 w-2.5" aria-hidden="true">
              <circle cx="5" cy="5" r="5" fill="#35a84a" />
              <path d="M2.500 5l2 2L8 3" fill="none" stroke="#fff" strokeWidth="1.200" />
            </svg>
          </span>
        </TrayIcon>
        <TrayIcon label="Akku">
          <svg viewBox="0 0 20 14" className="h-3.5 w-5" fill="none" stroke="#fff" strokeWidth="1.200" aria-hidden="true">
            <path d="M8 3h10v10H4.500V9M18.500 6h1v4h-1" />
            <path d="M9.500 5h7v6H6.500V8z" fill="#fff" stroke="none" />
            <path d="M1.500 0v3M4.500 0v3M.5 3h5v2.500h-5zM3 5.500V8" fill="#fff" />
          </svg>
        </TrayIcon>
        <TrayIcon label="Lautstärke">
          <svg viewBox="0 0 20 18" className="h-[18px] w-5" fill="none" stroke="#fff" strokeWidth="1.200" aria-hidden="true">
            <path d="M1 6.500h2.500L7.500 3v12l-4-3.500H1zM10 7c1 1 1 3 0 4M12.500 5c2 2 2 6 0 8" />
            <path d="M15 2.500c4 3 4 10 0 13" stroke="#8a9296" />
          </svg>
        </TrayIcon>
        <TrayIcon label="WLAN">
          <svg viewBox="0 0 17 17" className="h-[17px] w-[17px]" fill="none" stroke="#fff" strokeWidth="1.400" aria-hidden="true">
            <path d="M1 16C1 7 7 1.500 16 1.500M5 16c0-6 5-10.500 11-10.500M9 16c0-4 3-6.500 7-6.500" />
            <circle cx="14.500" cy="14.500" r="2" fill="#fff" stroke="none" />
          </svg>
        </TrayIcon>
        <TrayIcon label="Info-Center">
          <svg viewBox="0 0 20 20" className="h-5 w-5" aria-hidden="true">
            <path d="M0 0h20v16h-7l-3 4-3-4H0z" fill="#fff" />
            <path d="M4 4.500h12M4 8h12M4 11.500h8" stroke="#081217" strokeWidth="1.300" />
          </svg>
        </TrayIcon>
        <button type="button" className="w-[94px] text-center text-sm leading-[21px]">
          <time className="block">10:12</time>
          <time className="block">17.01.2016</time>
        </button>
        <button type="button" aria-label="Desktop anzeigen" className="h-full w-1.5 border-l border-[#5c6468]" />
      </div>
    </div>
  );
}

export default function App() {
  return (
    <div className={`flex h-screen flex-col overflow-hidden bg-[#e6e6e6] ${UI}`}>
      <Header />
      <Ribbon />
      <HorizontalRuler />
      <Workspace />
      <HorizontalScroll />
      <StatusBar />
      <Taskbar />
    </div>
  );
}
